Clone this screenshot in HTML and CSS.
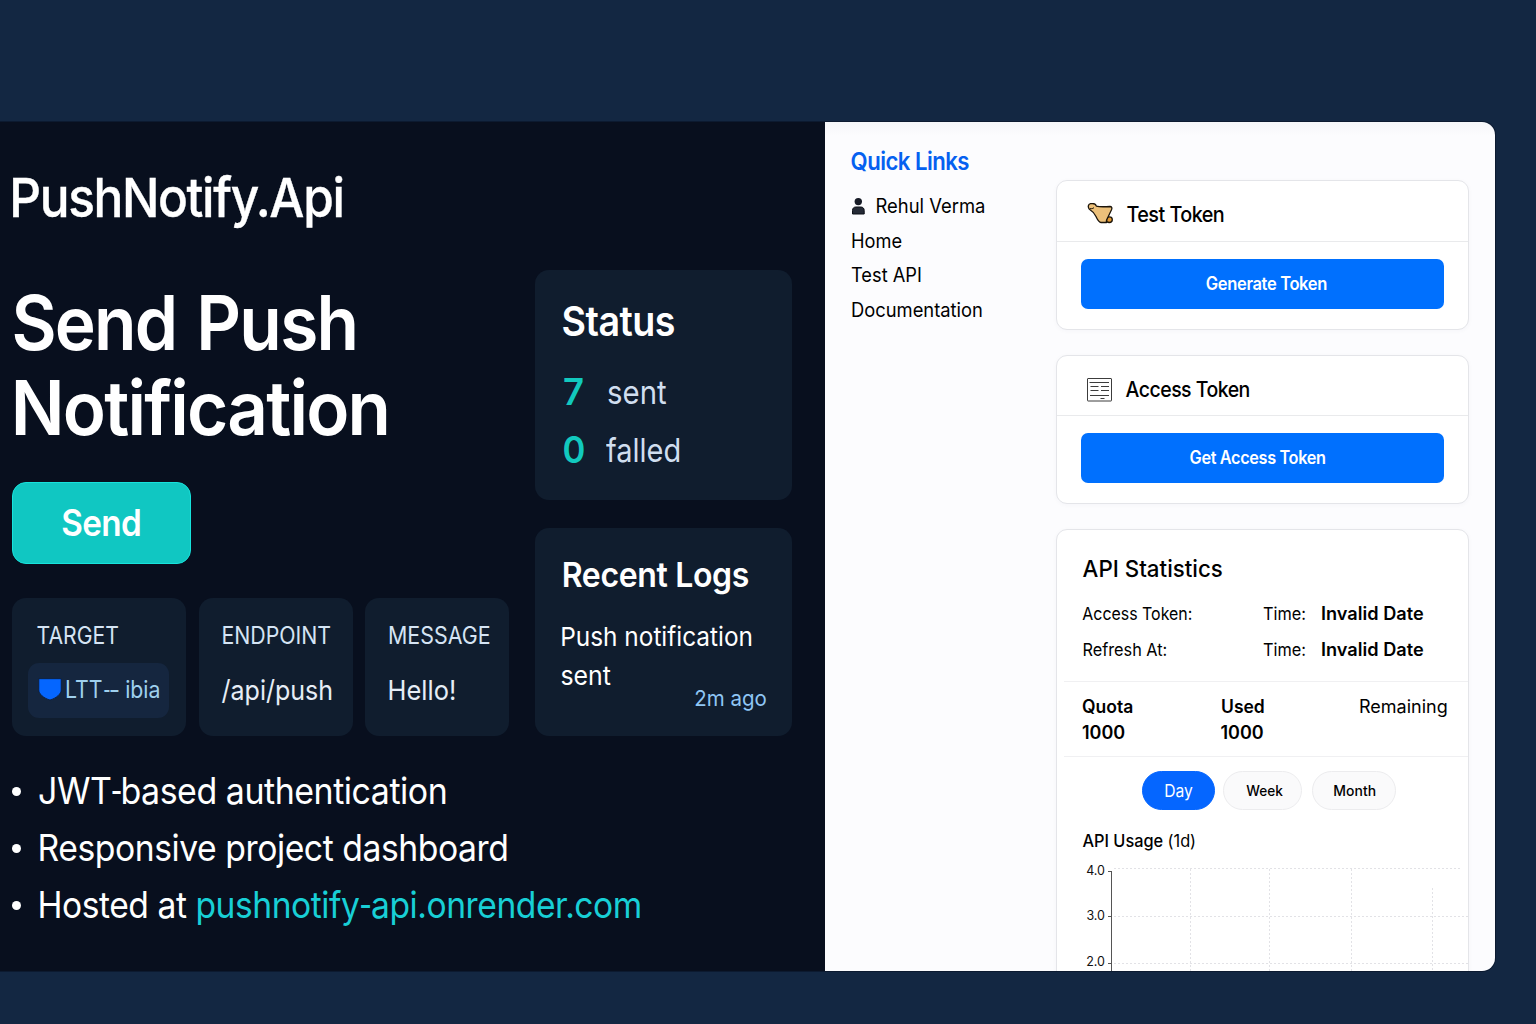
FILE: index.html
```html
<!DOCTYPE html>
<html lang="en">
<head>
<meta charset="utf-8">
<title>PushNotify.Api</title>
<link rel="stylesheet" href="styles.css">
</head>
<body>
<div class="shell">
  <main class="hero">
    <div class="brand"><span class="t t-brand">PushNotify.Api</span></div>
    <div class="board">
      <section class="compose">
        <h1 class="headline"><span class="t t-h1a">Send Push</span><span class="t t-h1b">Notification</span></h1>
        <button class="send"><span class="t t-send">Send</span></button>
        <div class="fields">
          <div class="field field-target">
            <div class="label"><span class="t t-target">TARGET</span></div>
            <div class="chip">
              <svg class="shield" width="24" height="24" viewBox="0 0 24 24"><path d="M.8 1.700h22.400v11.200c0 3.800-4.400 8-11.200 10.100C5.200 21 .8 16.700.8 12.900z"/></svg>
              <span class="t t-ltt">LTT<span class="hyphen">-–</span> ibia</span>
            </div>
          </div>
          <div class="field field-endpoint">
            <div class="label"><span class="t t-endpoint">ENDPOINT</span></div>
            <div class="value"><span class="t t-path">/api/push</span></div>
          </div>
          <div class="field field-message">
            <div class="label"><span class="t t-message">MESSAGE</span></div>
            <div class="value"><span class="t t-hello">Hello!</span></div>
          </div>
        </div>
      </section>
      <aside class="side">
        <section class="tile status">
          <h2><span class="t t-status">Status</span></h2>
          <div class="stat"><b><span class="t t-seven">7</span></b><span class="t t-sent">sent</span></div>
          <div class="stat"><b><span class="t t-zero">0</span></b><span class="t t-falled">falled</span></div>
        </section>
        <section class="tile logs">
          <h2><span class="t t-logs">Recent Logs</span></h2>
          <p><span class="t t-push">Push notification</span><span class="t t-sent2">sent</span></p>
          <time><span class="t t-ago">2m ago</span></time>
        </section>
      </aside>
    </div>
    <ul class="features">
      <li><span class="t t-f1">JWT<span class="hyphen">-</span>based authentication</span></li>
      <li><span class="t t-f2">Responsive project dashboard</span></li>
      <li><span class="t t-f3">Hosted at <a>pushnotify<span class="hyphen wide">-</span>api.onrender.com</a></span></li>
    </ul>
  </main>
  <div class="portal">
    <nav class="links">
      <h3><span class="t t-ql">Quick Links</span></h3>
      <div class="link"><svg class="user" width="14" height="18" viewBox="0 0 14 18"><circle cx="7.300" cy="4.600" r="3.700" fill="#171b26"/><path d="M1.500 17v-3.500c0-2.200 1.300-3.500 3.400-3.500h4.900c2.100 0 3.400 1.300 3.400 3.500v3.500z" fill="#252a36" stroke="#0b0e16"/></svg><span class="t t-rehul">Rehul Verma</span></div>
      <div class="link"><span class="t t-home">Home</span></div>
      <div class="link"><span class="t t-test">Test API</span></div>
      <div class="link"><span class="t t-docs">Documentation</span></div>
    </nav>
    <div class="cards">
      <section class="card token">
        <header>
          <svg width="27" height="22" viewBox="0 0 27 22" stroke="#1b140a" stroke-width="1.300" stroke-linejoin="round">
            <ellipse cx="23.300" cy="16.700" rx="3" ry="2.800" fill="#e39a32"/>
            <path d="M4.500.7C2 1.200 1.600 4.300 3.400 6.300 7 8.500 8.500 10.500 10 13.500c1.300 2.700 2.500 5.700 5 6h5.500c-.6-1.600.2-3 1.300-5l3.700-7.700c.8-1.900.3-3.300-1.500-3.300-5 .3-10 .6-13.600-.3C9.800.9 7.500.1 4.500.7z" fill="#ecc07a"/>
            <path d="M4 5.300c1 .8 2.500.4 4-.6" fill="none" stroke-width="1"/>
          </svg>
          <span class="t t-tt">Test Token</span>
        </header>
        <div class="action"><button><span class="t t-gen">Generate Token</span></button></div>
      </section>
      <section class="card token access">
        <header>
          <svg width="27" height="26" viewBox="0 0 27 26" fill="none" stroke="#3c3c3c">
            <rect x="1.500" y="2.500" width="24" height="22.500" rx=".5" fill="#fff"/>
            <path d="M3.500 6.500h19.500M4.500 10.500h8M15 10.500h8M4.500 14.500h8M15 14.500h8M4 19.500h19M14.500 22.500h4" stroke-width="1.200"/>
          </svg>
          <span class="t t-at">Access Token</span>
        </header>
        <div class="action"><button><span class="t t-get">Get Access Token</span></button></div>
      </section>
      <section class="card stats">
        <h4><span class="t t-api">API Statistics</span></h4>
        <div class="row"><span class="c1"><span class="t t-acc">Access Token:</span></span><span class="c2"><span class="t t-time">Time:</span></span><b><span class="t t-date">Invalid Date</span></b></div>
        <div class="row"><span class="c1"><span class="t t-ref">Refresh At:</span></span><span class="c2"><span class="t t-time">Time:</span></span><b><span class="t t-date">Invalid Date</span></b></div>
        <div class="quota">
          <div><span class="t t-quota">Quota</span><span class="t">1000</span></div>
          <div><span class="t t-quota">Used</span><span class="t">1000</span></div>
          <div class="rem"><span class="t">Remaining</span></div>
        </div>
        <div class="tabs"><button class="day"><span class="t t-day">Day</span></button><button class="week"><span class="t t-week">Week</span></button><button class="month"><span class="t t-month">Month</span></button></div>
        <h5><span class="t t-usage">API Usage <i>(1d)</i></span></h5>
        <svg class="chart" width="411" height="111" viewBox="0 0 411 111">
          <g class="grid">
            <path d="M57 8.500H404M57 56.500H411M57 103.500H411"/>
            <path d="M133.500 9V111M212.500 9V111M294.500 9V111M375.500 28V111"/>
          </g>
          <path class="axis" d="M54.500 11V111M51 11.500h3.500M51 56.500h3.500M51 103.500h3.500"/>
          <g class="ticks"><text x="48" y="15.200">4.0</text><text x="48" y="60">3.0</text><text x="48" y="106.200">2.0</text></g>
        </svg>
      </section>
    </div>
  </div>
</div>
</body>
</html>
```
FILE: styles.css
```css
* { box-sizing: border-box; margin: 0; padding: 0; }
body { width: 1536px; height: 1024px; overflow: hidden; background: #132742; font-family: Inter, "Liberation Sans", sans-serif; padding-top: 122px; }
button { border: 0; font: inherit; color: inherit; }

/* Condensed text: each label sets its own horizontal scale */
.t { display: inline-block; white-space: nowrap; transform-origin: left; transform: translateX(var(--dx, 0px)) scaleX(var(--sx, 1)); }
.hyphen { display: inline-block; line-height: 1; margin: 0 -.09em; transform: scaleX(.74); }
.hyphen.wide { margin: 0 -.05em; transform: scaleX(.82); }
.t-brand { --sx: .918; --dx: -2.7px; letter-spacing: -1.5px; }
.t-h1a { --sx: .926; --dx: -.6px; letter-spacing: -1.9px; word-spacing: 4.5px; }
.t-h1b { --sx: .945; --dx: -1.2px; letter-spacing: -1.9px; }
.t-send { --sx: .912; --dx: -.6px; letter-spacing: -.7px; }
.t-target { --sx: .882; --dx: -.4px; }
.t-ltt { --sx: .888; }
.t-endpoint { --sx: .888; --dx: .4px; }
.t-path { --sx: .91; --dx: .5px; }
.t-message { --sx: .892; }
.t-hello { --sx: .925; --dx: -.4px; }
.t-status { --sx: .918; --dx: -.4px; letter-spacing: -.6px; }
.t-seven { --dx: 1px; }
.t-zero { --sx: .95; --dx: .5px; }
.t-sent { --sx: .89; --dx: 1px; }
.t-falled { --sx: .878; }
.t-logs { --sx: .929; --dx: -.3px; letter-spacing: -.4px; }
.t-push { --sx: .938; --dx: -1.8px; }
.t-sent2 { --sx: .956; --dx: -1.5px; }
.t-ago { --sx: .932; --dx: -1px; transform-origin: right; }
.t-f1 { --sx: .93; --dx: -1px; letter-spacing: -.5px; }
.t-f2 { --sx: .924; --dx: -1.5px; letter-spacing: -.5px; }
.t-f3 { --sx: .921; --dx: -1.5px; letter-spacing: -.5px; }
.t-ql { --sx: .904; --dx: -.4px; letter-spacing: -.6px; }
.t-rehul { --sx: .944; --dx: .5px; }
.t-home { --sx: .935; }
.t-test { --sx: .936; }
.t-docs { --sx: .941; }
.t-tt { --sx: .9; --dx: .4px; letter-spacing: -.6px; }
.t-gen { --sx: .919; --dx: -.5px; letter-spacing: -.4px; }
.t-at { --sx: .887; --dx: -.4px; letter-spacing: -.6px; }
.t-get { --sx: .905; --dx: .4px; letter-spacing: -.4px; }
.t-api { --sx: .97; --dx: .6px; }
.t-acc { --sx: .91; --dx: .3px; }
.t-time { --sx: .932; }
.t-ref { --sx: .931; --dx: .4px; }
.t-date { --sx: 1.008; }
.t-quota { --sx: .973; }
.t-day { --sx: .92; }
.t-week { --sx: .94; }
.t-month { --sx: .961; --dx: -.5px; }
.t-usage { --sx: .96; --dx: .5px; }

.shell { width: 1495px; height: 848.5px; display: flex; border-radius: 0 13px 13px 0; overflow: hidden; box-shadow: 0 0 0 1px #0c1a30; }

.hero { width: 825px; background: #080f1e; color: #fff; padding: 42px 33px 0 12px; }
.brand { height: 67px; line-height: 68px; font-size: 54px; font-weight: 500; -webkit-text-stroke: .35px #fff; }
.board { display: flex; justify-content: space-between; margin-top: 39px; }
.compose { width: 497px; height: 466px; padding-top: 10px; }
.headline { font-size: 75px; line-height: 85px; font-weight: 600; }
.headline .t { display: block; width: max-content; }
.send { display: flex; align-items: center; justify-content: center; width: 179px; height: 82px; margin-top: 31.5px; border-radius: 14px; background: #10c7c2; border: 1px solid #17e3dc; font-size: 36.5px; font-weight: 600; }
.send .t, .card button .t { transform-origin: center; }

.fields { display: flex; margin-top: 34px; height: 138px; }
.field { background: #101d2e; border-radius: 14px; color: #d5e4f4; padding: 24px 0 0; }
.field-target { width: 174px; margin-right: 13px; padding-left: 16px; }
.field-target .label { padding-left: 9px; }
.field-endpoint { width: 154px; margin-right: 12px; padding-left: 22px; }
.field-message { width: 144px; padding-left: 23px; }
.label { font-size: 24px; line-height: 28px; }
.value { font-size: 27.5px; line-height: 30px; margin-top: 25px; color: #e6edf6; }
.chip { display: flex; align-items: center; gap: 3px; width: 141px; height: 55px; margin-top: 13px; padding: 0 0 2px 10px; border-radius: 11px; background: #15263f; color: #9fd0ee; font-size: 24px; }
.shield { flex: none; fill: #0566ff; stroke: #0c1a33; stroke-width: .8; }

.side { width: 257px; display: flex; flex-direction: column; gap: 28px; }
.tile { background: #101d2e; border-radius: 14px; padding-left: 27px; }
.status { height: 230px; padding-top: 27px; }
.status h2 { font-size: 41px; line-height: 48px; font-weight: 600; margin-bottom: 18px; }
.stat { display: flex; height: 58px; line-height: 58px; font-size: 33px; color: #d0deef; }
.stat b { width: 44px; font-size: 36.5px; font-weight: 600; color: #12c9be; }
.logs { height: 208px; padding-top: 27px; }
.logs h2 { font-size: 34.5px; line-height: 40px; font-weight: 600; }
.logs p { font-size: 26px; line-height: 39px; margin-top: 22px; }
.logs p .t { display: block; width: max-content; }
.logs time { display: block; font-size: 22px; line-height: 26px; margin: -10px 24px 0 0; text-align: right; color: #8fc6f4; }

.features { list-style: none; margin-top: 27px; font-size: 36.5px; line-height: 57px; }
.features li { display: flex; align-items: center; }
.features li::before { content: ""; width: 9px; height: 9px; margin-right: 18px; border-radius: 50%; background: #fff; }
.features a { color: #18cfd6; }

.portal { flex: 1; background: linear-gradient(#f5f6f9, #fcfcfe 14px); display: flex; color: #000; padding-left: 26px; }
.links { width: 205px; flex: none; padding-top: 24px; font-size: 19.5px; }
.links h3 { font-size: 24.5px; line-height: 30px; font-weight: 600; color: #0560f0; margin-bottom: 13px; }
.link { display: flex; align-items: center; height: 34.6px; }
.user { margin-right: 10px; }

.cards { width: 413px; flex: none; padding-top: 58px; }
.card { background: #fff; border: 1px solid #e4e5e9; border-radius: 11px; box-shadow: 0 1px 5px rgba(30, 40, 80, .03); }
.token { height: 149.5px; margin-bottom: 25px; }
.token header { display: flex; align-items: center; gap: 13px; height: 60.5px; padding: 6px 0 0 29px; border-bottom: 1px solid #e9eaec; font-size: 22px; font-weight: 500; }
.access header { height: 60px; padding-top: 8px; }
.action { padding: 17.5px 24px; }
.action button { width: 100%; height: 49.5px; padding-left: 8px; border-radius: 7px; background: #0070fe; color: #fff; font-size: 18px; font-weight: 600; }
.access .action button { padding: 0 10px 0 0; }

.stats { height: 480px; padding: 24px 0 0 25px; }
.stats h4 { font-size: 23px; line-height: 30px; font-weight: 500; margin-bottom: 12px; }
.row { display: flex; height: 36px; line-height: 36px; font-size: 17.5px; }
.c1 { width: 181px; }
.c2 { width: 58px; }
.row b { font-size: 18px; font-weight: 600; }
.quota { display: flex; margin: 13px 0 0 -18px; padding: 12px 0 11px 18px; border-top: 1px solid #f0f0f2; border-bottom: 1px solid #f0f0f2; font-size: 18px; line-height: 25.5px; font-weight: 600; }
.quota div { width: 138.5px; }
.quota .t { display: block; width: max-content; }
.quota .rem { width: auto; font-weight: 400; }

.tabs { display: flex; font-size: 14.5px; font-weight: 500; margin: 14px 0 0 60px; }
.tabs button { height: 39px; border-radius: 20px; border: 1px solid #ececee; background: #fafafb; }
.tabs .day { width: 73px; margin-right: 8px; font-size: 17px; font-weight: 400; background: #0566ff; border-color: #0566ff; color: #fff; }
.tabs .week { width: 79px; margin-right: 9.5px; padding-left: 4px; }
.tabs .month { width: 84.5px; padding-left: 3px; }

h5 { font-size: 17px; line-height: 24px; font-weight: 500; margin-top: 19px; }
h5 i { font-style: normal; font-weight: 400; }
.chart { display: block; margin: 7px 0 0 -25px; }
.grid { fill: none; stroke: #e2e2e6; stroke-dasharray: 2 2; }
.axis { fill: none; stroke: #555; }
.ticks { font-size: 12.5px; text-anchor: end; fill: #111; }
```
